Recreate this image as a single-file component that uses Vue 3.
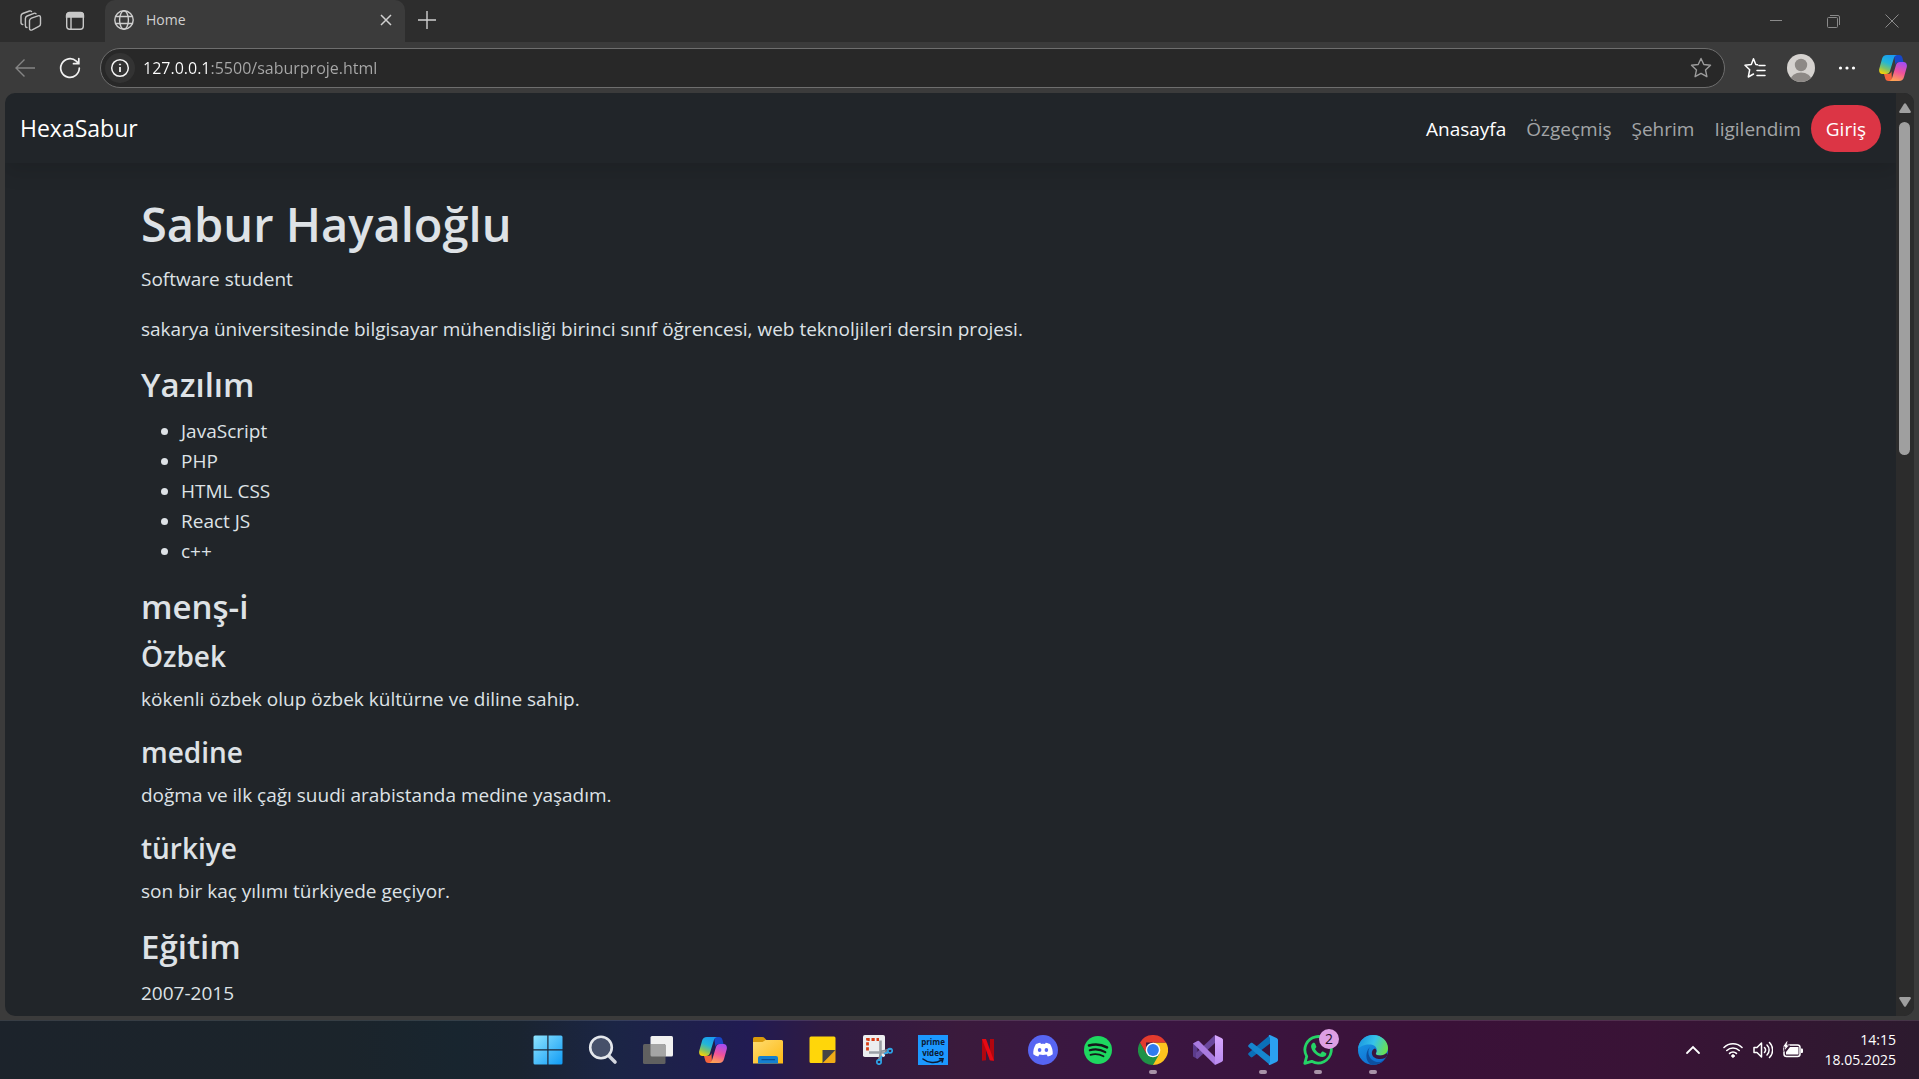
<script setup>
const navLinks = [
  { label: 'Anasayfa', active: true },
  { label: 'Özgeçmiş' },
  { label: 'Şehrim' },
  { label: 'Iigilendim' },
]
const skills = ['JavaScript', 'PHP', 'HTML CSS', 'React JS', 'c++']
const origins = [
  { title: 'Özbek', text: 'kökenli özbek olup özbek kültürne ve diline sahip.' },
  { title: 'medine', text: 'doğma ve ilk çağı suudi arabistanda medine yaşadım.' },
  { title: 'türkiye', text: 'son bir kaç yılımı türkiyede geçiyor.' },
]
</script>

<template>
  <div class="desktop">
    <svg class="defs" width="0" height="0" aria-hidden="true">
      <defs>
        <linearGradient id="cpLeft" x1="0.6" y1="0" x2="0.2" y2="1">
          <stop offset="0" stop-color="#1a9cf0" /><stop offset=".4" stop-color="#22b6d8" /><stop offset=".7" stop-color="#7cc26a" /><stop offset="1" stop-color="#ffd400" />
        </linearGradient>
        <linearGradient id="cpRight" x1="0.6" y1="0" x2="0.3" y2="1">
          <stop offset="0" stop-color="#a64df0" /><stop offset=".5" stop-color="#f0529a" /><stop offset="1" stop-color="#ffa552" />
        </linearGradient>
        <linearGradient id="win" x1="0" y1="0" x2="1" y2="1">
          <stop offset="0" stop-color="#8fe4ff" /><stop offset="1" stop-color="#0f9bf5" />
        </linearGradient>
        <linearGradient id="fold" x1="0" y1="0" x2="1" y2="1">
          <stop offset="0" stop-color="#ffdc70" /><stop offset="1" stop-color="#fdb913" />
        </linearGradient>
        <linearGradient id="edgeTop" x1="0" y1="0.3" x2="1" y2="0.6">
          <stop offset="0" stop-color="#1a96e0" /><stop offset=".5" stop-color="#36c3ea" /><stop offset="1" stop-color="#6be04c" />
        </linearGradient>
        <linearGradient id="edgeLow" x1="0" y1="0" x2="0.6" y2="1">
          <stop offset="0" stop-color="#1a9de8" /><stop offset="1" stop-color="#0f6cd0" />
        </linearGradient>
        <linearGradient id="vsRight" x1="0" y1="0" x2="0" y2="1">
          <stop offset="0" stop-color="#d9a8ff" /><stop offset="1" stop-color="#b98af0" />
        </linearGradient>
        <symbol id="copilot" viewBox="0 0 28 26">
          <path d="M15 0h5c2 0 3 1.300 3.500 3l1 4H20c-2 0-3 1-3.500 3z" fill="#1747c8" />
          <path d="M13 26H9.500c-2 0-3-1.200-3.400-3L5 19h4c2 0 3-1 3.500-3z" fill="#f4643c" />
          <path d="M8 0h10c-2 .5-2.800 1.800-3.400 4L11 16c-.7 2-1.700 3-4 3H3.500C1 19-.3 17 .2 14L3 4C3.700 1.500 5.200 0 8 0z" fill="url(#cpLeft)" />
          <path d="M20 26H10c2-.5 2.800-1.800 3.400-4L17 10c.7-2 1.700-3 4-3h3.500c2.500 0 3.800 2 3.300 5L25 22c-.7 2.500-2.200 4-5 4z" fill="url(#cpRight)" />
        </symbol>
      </defs>
    </svg>

    <header class="tabstrip">
      <button class="plain workspaces" aria-label="Workspaces">
        <svg width="22" height="22" viewBox="0 0 22 22" fill="none" stroke="#c4c4c4" stroke-width="1.400" stroke-linejoin="round" stroke-linecap="round">
          <path d="M9.500 10.500c.2-1.200.8-1.900 2-2.400l6.500-2.300c1.600-.5 2.500.2 2.500 1.700v6.400c0 1.200-.6 2-1.700 2.400l-6.600 3.500c-1.700.8-2.700.1-2.700-1.500z" />
          <path d="M7 17.500c-1 0-1.600-.6-1.600-1.800V8.500c0-1.200.6-2 1.700-2.500L14 3.300c.8-.3 1.500-.1 2 .4" />
          <path d="M2.800 14.500C1.700 14.500 1 14 1 12.600V6c0-1.200.6-2 1.700-2.500L9.500 1c.8-.3 1.500-.1 2 .4" />
        </svg>
      </button>
      <button class="plain actions" aria-label="Tab actions">
        <svg width="20" height="20" viewBox="0 0 20 20" fill="none" stroke="#c8c8c8" stroke-width="1.400">
          <rect x="1.700" y="1.700" width="16.600" height="16.600" rx="3" />
          <path d="M1.500 6V4.500a3 3 0 0 1 3-3h11a3 3 0 0 1 3 3V6z" fill="#c8c8c8" />
          <path d="M6 6v12" />
        </svg>
      </button>
      <div class="tab">
        <svg width="20" height="20" viewBox="0 0 20 20" fill="none" stroke="#cfcfcf" stroke-width="1.400">
          <circle cx="10" cy="10" r="9.200" /><ellipse cx="10" cy="10" rx="4.400" ry="9.200" /><path d="M1.600 6.500h16.800M1.600 13.500h16.800" />
        </svg>
        <span class="tab-title">Home</span>
        <button class="plain" aria-label="Close tab">
          <svg width="12" height="12" viewBox="0 0 12 12" stroke="#d0d0d0" stroke-width="1.500"><path d="M1 1l10 10M11 1L1 11" /></svg>
        </button>
      </div>
      <button class="plain plus" aria-label="New tab">
        <svg width="18" height="18" viewBox="0 0 18 18" stroke="#d0d0d0" stroke-width="1.400"><path d="M9 0v18M0 9h18" /></svg>
      </button>
      <div class="window-controls">
        <button class="plain" aria-label="Minimize"><svg width="14" height="14" viewBox="0 0 14 14" stroke="#8a8a8a"><path d="M1 6.500h12" /></svg></button>
        <button class="plain" aria-label="Restore"><svg width="14" height="14" viewBox="0 0 14 14" fill="none" stroke="#8a8a8a"><rect x=".5" y="3.500" width="10" height="10" rx="1" /><path d="M3 1.500h8a1.500 1.500 0 0 1 1.500 1.500v8" /></svg></button>
        <button class="plain" aria-label="Close"><svg width="14" height="14" viewBox="0 0 14 14" stroke="#8a8a8a"><path d="M.5.5l13 13M13.500.5l-13 13" /></svg></button>
      </div>
    </header>

    <div class="toolbar">
      <button class="plain" aria-label="Back">
        <svg width="20" height="20" viewBox="0 0 20 20" fill="none" stroke="#858585" stroke-width="1.400"><path d="M9.500 1.500L1 10l8.500 8.500M1 10h19" /></svg>
      </button>
      <button class="plain refresh" aria-label="Refresh">
        <svg width="22" height="22" viewBox="0 0 22 22" fill="none" stroke="#f2f2f2" stroke-width="1.700" stroke-linecap="round"><path d="M20.300 11a9.300 9.300 0 1 1-3-6.800L19.700 6.500M19.800 1.500v5.200h-5.300" /></svg>
      </button>
      <div class="address">
        <button class="plain info" aria-label="Site information">
          <svg width="20" height="20" viewBox="0 0 20 20" fill="none" stroke="#f5f5f5" stroke-width="1.500"><circle cx="10" cy="10" r="8.300" /><path d="M10 9v5" stroke-width="1.800" /><circle cx="10" cy="6.500" r=".6" fill="#f5f5f5" stroke-width="1" /></svg>
        </button>
        <input class="url" type="text" aria-label="Address" value="127.0.0.1:5500/saburproje.html" />
        <button class="plain" aria-label="Add to favorites">
          <svg width="22" height="22" viewBox="0 0 22 22" fill="none" stroke="#9c9c9c" stroke-width="1.400" stroke-linejoin="round"><path d="M11 1.500l2.800 6 6.700.8-5 4.600 1.400 6.800L11 16.400l-5.900 3.300 1.400-6.800-5-4.600 6.700-.8z" /></svg>
        </button>
      </div>
      <button class="plain" aria-label="Favorites">
        <svg width="22" height="22" viewBox="0 0 22 22" fill="none" stroke="#fff" stroke-width="1.500" stroke-linejoin="round" stroke-linecap="round"><path d="M13.500 7.800L11.800 7.500 9.500 1.800 7.300 7.600 1 8.300l4.700 4.400L4.300 20l5.200-3M15 8.500h6M13 13.500h8M13 18.500h8" /></svg>
      </button>
      <button class="plain" aria-label="Profile">
        <svg width="28" height="28" viewBox="0 0 28 28"><clipPath id="av"><circle cx="14" cy="14" r="14" /></clipPath><g clip-path="url(#av)"><path d="M0 0h28v28H0z" fill="#d5d2cf" /><circle cx="14" cy="11" r="6.200" fill="#8d8986" /><ellipse cx="14" cy="26" rx="10.500" ry="7.500" fill="#8d8986" /></g></svg>
      </button>
      <button class="plain more" aria-label="Settings and more">
        <svg width="18" height="18" viewBox="0 0 18 18" fill="#fff"><circle cx="2.500" cy="9" r="1.600" /><circle cx="9" cy="9" r="1.600" /><circle cx="15.500" cy="9" r="1.600" /></svg>
      </button>
      <button class="plain" aria-label="Copilot"><svg width="28" height="26"><use href="#copilot" /></svg></button>
    </div>

    <div class="viewport">
      <div class="page">
        <nav class="navbar">
          <a href="#" class="brand">HexaSabur</a>
          <div class="links">
            <a v-for="l in navLinks" :key="l.label" href="#" :class="['link', { active: l.active }]">{{ l.label }}</a>
            <button class="login">Giriş</button>
          </div>
        </nav>
        <main class="content">
          <h1>Sabur Hayaloğlu</h1>
          <p>Software student</p>
          <p>sakarya üniversitesinde bilgisayar mühendisliği birinci sınıf öğrencesi, web teknoljileri dersin projesi.</p>
          <h2>Yazılım</h2>
          <ul>
            <li v-for="s in skills" :key="s">{{ s }}</li>
          </ul>
          <h2>menş-i</h2>
          <template v-for="o in origins" :key="o.title">
            <h3>{{ o.title }}</h3>
            <p>{{ o.text }}</p>
          </template>
          <h2>Eğitim</h2>
          <p class="last">2007-2015</p>
        </main>
      </div>
      <div class="scrollbar" aria-hidden="true">
        <svg width="12" height="10" viewBox="0 0 12 10"><path d="M5 .8Q6-.3 7 .8L11.800 8.500Q12 10 10.800 10H1.200Q0 10 .2 8.500z" fill="#9f9f9f" /></svg>
        <div class="track"><div class="thumb"></div></div>
        <svg width="12" height="10" viewBox="0 0 12 10"><path d="M5 9.200Q6 10.300 7 9.200L11.800 1.500Q12 0 10.800 0H1.200Q0 0 .2 1.500z" fill="#9f9f9f" /></svg>
      </div>
    </div>

    <footer class="taskbar">
      <div class="apps">
        <button class="plain app" aria-label="Start">
          <svg width="30" height="30" viewBox="0 0 30 30" fill="url(#win)"><path d="M.5 2A1.500 1.500 0 0 1 2 .5h12.300v13.800H.5zM15.500.5H28A1.500 1.500 0 0 1 29.500 2v12.300h-14zM.5 15.500h13.800v14H2A1.500 1.500 0 0 1 .5 28zM15.500 15.500h14V28a1.500 1.500 0 0 1-1.500 1.500H15.500z" /></svg>
        </button>
        <button class="plain app" aria-label="Search">
          <svg width="30" height="30" viewBox="0 0 30 30"><path d="M20.500 20.500l6.500 6.500" stroke="#d3d7df" stroke-width="3.600" stroke-linecap="round" /><circle cx="13" cy="12.500" r="10.800" fill="#46506a" stroke="#e4e7ec" stroke-width="2.600" /></svg>
        </button>
        <button class="plain app" aria-label="Task view">
          <svg width="30" height="30" viewBox="0 0 30 30"><rect x="7.500" y="1" width="22.500" height="20.500" rx="1.500" fill="#f1f1f1" /><rect y="9" width="22.500" height="20" rx="1.500" fill="#606060" /><path d="M7.500 9H21a1.500 1.500 0 0 1 1.500 1.500v11H9A1.500 1.500 0 0 1 7.500 20z" fill="#a5a5a5" /></svg>
        </button>
        <button class="plain app" aria-label="Copilot"><svg width="28" height="26"><use href="#copilot" /></svg></button>
        <button class="plain app" aria-label="File Explorer">
          <svg width="30" height="30" viewBox="0 0 30 30"><path d="M0 8V3.500A1.500 1.500 0 0 1 1.500 2h7.800c1 0 1.500.3 2.200 1L14 5.500 10 9z" fill="#d99a0b" /><path d="M0 7h9.500l3-2H28.500A1.500 1.500 0 0 1 30 6.500V28.500H0z" fill="url(#fold)" /><path d="M5 28.500V23a2 2 0 0 1 2-2h16a2 2 0 0 1 2 2v5.500z" fill="#1580cf" /><path d="M9 24.700h12.500" stroke="#0b4f96" stroke-width="1.300" stroke-linecap="round" /></svg>
        </button>
        <button class="plain app" aria-label="Sticky Notes">
          <svg width="30" height="30" viewBox="0 0 30 30"><path d="M3 1.500h23a1.500 1.500 0 0 1 1.500 1.500v12L15 28H3A1.500 1.500 0 0 1 1.500 26.500V3A1.500 1.500 0 0 1 3 1.500z" fill="#ffd60a" /><path d="M14.500 15h13L15 28h-.5z" fill="#454545" /><path d="M27.500 15v11.500A1.500 1.500 0 0 1 26 28H14.800z" fill="#f0ad17" /></svg>
        </button>
        <button class="plain app" aria-label="Snipping Tool">
          <svg width="30" height="30" viewBox="0 0 30 30" fill="none"><rect x="0" y="0" width="22" height="22" rx="1.800" fill="#eceef0" /><path d="M4.500 15.500V4.500H16" stroke="#d83b12" stroke-width="2.800" stroke-dasharray="3.200 1.800" /><path d="M17.500 5.500V26M6 17.500h19" stroke="#9ba0a6" stroke-width="2.600" /><path d="M15 26l3.500-10L28 14" stroke="#8a9097" stroke-width="1.400" /><circle cx="16" cy="27" r="2.200" stroke="#2ba4e8" stroke-width="1.700" /><circle cx="27" cy="15.800" r="2.200" stroke="#2ba4e8" stroke-width="1.700" /><path d="M17 24.800l2-4M25 17l-4 2" stroke="#2ba4e8" stroke-width="1.800" /></svg>
        </button>
        <button class="plain app prime" aria-label="Prime Video">
          <span>prime</span><span>video</span>
          <svg width="24" height="6" viewBox="0 0 24 6" fill="none" stroke="#0c1a33" stroke-width="1.600" stroke-linecap="round"><path d="M2 1c5 4.200 13 4.600 18 1.300M18.500.8l3.500-.2-.8 3.300" /></svg>
        </button>
        <button class="plain app" aria-label="Netflix">
          <svg width="30" height="30" viewBox="0 0 30 30"><path d="M9 4h4v21.200l-4 .5zM17 4h4v21.700l-4-.5z" fill="#b1060f" /><path d="M9 4h4l8 21.700-4.200-.5z" fill="#e50914" /></svg>
        </button>
        <button class="plain app" aria-label="Discord">
          <svg width="30" height="30" viewBox="0 0 30 30"><circle cx="15" cy="15" r="15" fill="#5765f2" /><path d="M12.300 7.700c-2 .3-3.600.9-4.500 1.500C5.900 12.300 5 15.700 5.300 19.300c1.600 1.200 3.200 1.900 4.900 2.300l1.200-2c2.500.6 4.700.6 7.200 0l1.200 2c1.700-.4 3.300-1.100 4.900-2.300.3-3.600-.6-7-2.500-10.100-.9-.6-2.500-1.200-4.500-1.500l-.7 1.200c-1.300-.2-2.700-.2-4 0z" fill="#fff" /><ellipse cx="11.600" cy="15" rx="1.800" ry="2" fill="#5765f2" /><ellipse cx="18.400" cy="15" rx="1.800" ry="2" fill="#5765f2" /></svg>
        </button>
        <button class="plain app" aria-label="Spotify">
          <svg width="30" height="30" viewBox="0 0 30 30" fill="none" stroke="#14171a" stroke-linecap="round"><circle cx="15" cy="15" r="14" fill="#1ed760" stroke="none" /><path d="M6 10.500c6-1.700 12.500-1.100 18 1.900" stroke-width="2.600" /><path d="M6.800 15.300c5.200-1.500 10.800-.9 15.500 1.800" stroke-width="2.200" /><path d="M7.500 19.800c4.500-1.200 9-.7 13 1.500" stroke-width="1.800" /></svg>
        </button>
        <button class="plain app open" aria-label="Chrome">
          <svg width="30" height="30" viewBox="0 0 30 30"><path d="M28 7.500A15 15 0 0 1 15 30l0-15V7.500z" fill="#fcc31e" /><path d="M2 7.500A15 15 0 0 0 15 30l6.500-11.200L15 15 8.500 18.700z" fill="#1f9246" /><path d="M8 7.500h20A15 15 0 0 0 2 7.500l6.400 11z" fill="#e33b2e" /><circle cx="15" cy="15" r="7.300" fill="#fff" /><circle cx="15" cy="15" r="5.900" fill="#2f7bee" /></svg>
        </button>
        <button class="plain app" aria-label="Visual Studio">
          <svg width="30" height="30" viewBox="0 0 30 30"><path d="M0 8.500L4.500 6v18L0 21.500z" fill="#5b3b8c" /><path d="M4.500 24L22 8V0L3 18v5z" fill="#6a479c" /><path d="M0 8.500L4.500 6c.8-.4 1.400-.2 2 .4L22 22V30L.5 9z" fill="#a97be0" /><path d="M22 0l6.500 3c1 .5 1.500 1.200 1.500 2.200v19.600c0 1-.5 1.700-1.500 2.200L22 30z" fill="url(#vsRight)" /></svg>
        </button>
        <button class="plain app open" aria-label="Visual Studio Code">
          <svg width="30" height="30" viewBox="0 0 30 30"><path d="M22 0v8.500L4.500 22c-.6.500-1.200.5-1.800 0L.6 20c-.6-.6-.6-1.300 0-1.900z" fill="#0b6fb8" /><path d="M22 30v-8.500L4.500 8c-.6-.5-1.200-.5-1.800 0L.6 10c-.6.6-.6 1.300 0 1.900z" fill="#1685cf" /><path d="M22 0l6.500 3c1 .5 1.500 1.200 1.500 2.200v19.600c0 1-.5 1.700-1.500 2.200L22 30c-.6.200-1 0-1.300-.5L22 27V3L20.700.8C21 .1 21.400-.2 22 0z" fill="#2ba1f0" /></svg>
        </button>
        <button class="plain app open" aria-label="WhatsApp">
          <svg width="30" height="30" viewBox="0 0 30 30"><path d="M1.800 28.300l1.900-6.900a13.200 13.200 0 1 1 5 4.900z" fill="none" stroke="#25d366" stroke-width="2.800" stroke-linejoin="round" /><path d="M10.800 7.800c.6 0 1 .1 1.300.8l1.200 2.800c.2.500 0 .9-1.300 2.500 1.300 2.400 3 3.800 5.400 4.800l1.500-1.900c.3-.4.7-.4 1.200-.2l2.700 1.300c.5.300.7.5.5 1.400-.4 1.800-2.200 2.900-4 2.800-5-.7-10-5-11.100-9.700-.4-2 .9-4.600 2.600-4.600z" fill="#25d366" /></svg>
          <span class="badge">2</span>
        </button>
        <button class="plain app open" aria-label="Edge">
          <svg width="30" height="30" viewBox="0 0 30 30"><circle cx="15" cy="15" r="15" fill="url(#edgeLow)" /><path d="M12 12c-3 4-2 12 5 14.500 4 1.400 8 .5 10.800-3.800A15 15 0 0 1 15 30C8 29 6 18 12 12z" fill="#0d4f9f" /><path d="M0 14C1 5 7.500 0 15 0c9 0 15 6.500 15 13 0 5-3.600 7.500-7.500 7.500-3 0-5-1-4.500-2.300 2-3 .5-8.200-5-8.700C7.500 9 2 11 0 14z" fill="url(#edgeTop)" /><path d="M18 18c-.8 1.200.5 2.600 4 2.600 3 0 5-1 6.500-2.800L29.300 20c-.6 1.400-1.200 2.300-2.200 3-5 2.500-12 .5-13-3.500-.8-3 .8-5.500 3-6 1.500 1 1.800 3 .9 4.500z" fill="#3a153d" /></svg>
        </button>
      </div>
      <div class="tray">
        <button class="plain" aria-label="Show hidden icons"><svg width="16" height="10" viewBox="0 0 16 10" fill="none" stroke="#fff" stroke-width="1.800" stroke-linecap="round"><path d="M2 8l6-6 6 6" /></svg></button>
        <div class="status">
          <svg width="20" height="18" viewBox="0 0 20 18" fill="none" stroke="#fff" stroke-width="1.600" stroke-linecap="round"><path d="M1 6.500a12.800 12.800 0 0 1 18 0M3.800 9.500a8.800 8.800 0 0 1 12.400 0M6.600 12.400a4.800 4.800 0 0 1 6.800 0" /><circle cx="10" cy="15" r="1.300" fill="#fff" stroke-width="1" /></svg>
          <svg width="20" height="18" viewBox="0 0 20 18" fill="none" stroke="#fff" stroke-width="1.500" stroke-linecap="round" stroke-linejoin="round"><path d="M1 6.500h3L8.500 2v14L4 11.500H1zM11.500 6.500a3.800 3.800 0 0 1 0 5M14 4a7 7 0 0 1 0 10M16.500 1.500a10.500 10.500 0 0 1 0 15" /></svg>
          <svg width="20" height="18" viewBox="0 0 20 18"><rect x="1" y="4" width="16" height="11.500" rx="2.500" fill="none" stroke="#fff" stroke-width="1.500" /><path d="M7 6h8.500v7.500H3V11z" fill="#fff" /><path d="M18 7.500h1a1 1 0 0 1 1 1v2.500a1 1 0 0 1-1 1h-1z" fill="#fff" /><path d="M4-.5L-.5 6H2L1 10.500 6.500 4H4L5-.5z" fill="#fff" stroke="#351532" stroke-width=".8" /></svg>
        </div>
        <div class="clock"><span>14:15</span><span>18.05.2025</span></div>
      </div>
    </footer>
  </div>
</template>

<style>
body { background: #3b3b3b; }
</style>

<style scoped>
.desktop { display: flex; flex-direction: column; height: 100vh; overflow: hidden; background: #3b3b3b; font-family: "Open Sans", "Noto Sans", sans-serif; color: #dee2e6; }
.desktop * { box-sizing: border-box; }
.defs { position: absolute; }
.plain { display: flex; align-items: center; justify-content: center; flex: none; margin: 0; padding: 0; border: 0; background: none; color: inherit; font: inherit; }
.plain svg { display: block; }

.tabstrip { display: flex; align-items: center; flex: none; height: 42px; padding-left: 20px; background: #2d2d2d; }
.actions { margin-left: 23px; }
.tab { display: flex; align-items: center; width: 300px; height: 42px; margin-left: 20px; padding: 0 13px 2px 9px; border-radius: 10px 10px 0 0; background: #3b3b3b; }
.tab-title { flex: 1; margin-left: 12px; font-size: 14px; line-height: 20px; color: #d0d0d0; }
.plus { margin-left: 13px; padding-bottom: 2px; }
.window-controls { display: flex; gap: 44px; margin-left: auto; padding-right: 20px; }

.toolbar { display: flex; align-items: center; flex: none; height: 51px; padding: 0 12px 0 15px; background: #3b3b3b; gap: 21px; }
.refresh { margin: 0 -2px 0 3px; }
.more { width: 22px; }
.address { display: flex; align-items: center; flex: 1; height: 40px; margin-right: -2px; padding: 0 12px 0 4px; border: 1px solid #6e6e6e; border-radius: 20px; background: #282828; }
.info { width: 30px; height: 30px; border-radius: 50%; background: #333; }
.url { flex: 1; min-width: 0; margin-left: 8px; padding: 0; border: 0; outline: 0; font-family: inherit; font-size: 16px; line-height: 30px; color: transparent; background: linear-gradient(90deg, #fff 66px, #a9a9a9 66px); background-clip: text; -webkit-background-clip: text; }

.viewport { display: flex; flex: 1; min-height: 0; margin: 0 5px 4px; border-radius: 10px; overflow: hidden; background: #212529; }
.page { flex: 1; min-width: 0; overflow: hidden; }
.navbar { display: flex; align-items: center; justify-content: space-between; height: 70px; padding: 0 15px; box-shadow: 0 8px 20px rgba(0, 0, 0, 0.12); }
.navbar a { text-decoration: none; }
.brand { font-size: 23px; color: #fff; }
.links { display: flex; align-items: center; }
.link { padding: 1px 10px 0; font-size: 19px; color: #a3a5a7; }
.link.active { color: #fff; }
.login { height: 47px; padding: 1px 15px 0; border: 0; border-radius: 24px; background: #dc3545; color: #fff; font-family: inherit; font-size: 19px; }

.content { padding: 31px 136px 0; font-size: 19px; line-height: 30px; }
h1, h2, h3 { margin: 0 0 10px; font-weight: 600; }
h1 { font-size: 47px; line-height: 60px; }
h2 { font-size: 33px; line-height: 42px; }
h3 { font-size: 28px; line-height: 36px; }
p, ul { margin: 0 0 20px; }
.last { margin: 0; }
ul { padding-left: 40px; }

.scrollbar { display: flex; flex-direction: column; align-items: center; flex: none; width: 18px; padding: 10px 0 9px; background: #2c2c2c; }
.track { flex: 1; width: 12px; padding: 9px 0; }
.thumb { width: 11px; height: 333px; border-radius: 6px; background: #9f9f9f; }

.taskbar { display: grid; grid-template-columns: 1fr auto 1fr; align-items: center; flex: none; height: 59px; padding-left: 2px; border-top: 1px solid rgba(255, 255, 255, 0.12); background: linear-gradient(90deg, #1c232b 0%, #1b242b 18%, #18252f 24%, #1a2430 27%, #1b2545 32%, #211b52 39%, #301b42 43%, #3a1a3c 50%, #3a1642 58%, #3a1138 75%, #391336 86%, #2c1a2e 100%); }
.apps { display: flex; grid-column: 2; gap: 25px; }
.app { position: relative; width: 30px; height: 30px; }
.open::after { content: ""; position: absolute; left: 11px; top: 35px; width: 8px; height: 4px; border-radius: 2px; background: #a893a8; }
.prime { flex-direction: column; background: #1c98ff; color: #0c1a33; font-size: 8px; font-weight: 700; line-height: 11px; }
.badge { position: absolute; left: 16px; top: -6px; width: 20px; height: 20px; border-radius: 50%; background: #dd9fe3; color: #24122a; font-size: 14px; line-height: 20px; text-align: center; }
.tray { display: flex; align-items: center; justify-content: flex-end; padding-right: 23px; color: #fff; }
.status { display: flex; gap: 10px; margin: 0 20px 0 22px; }
.clock { display: flex; flex-direction: column; min-width: 73px; text-align: right; font-size: 14px; line-height: 20px; }
</style>
